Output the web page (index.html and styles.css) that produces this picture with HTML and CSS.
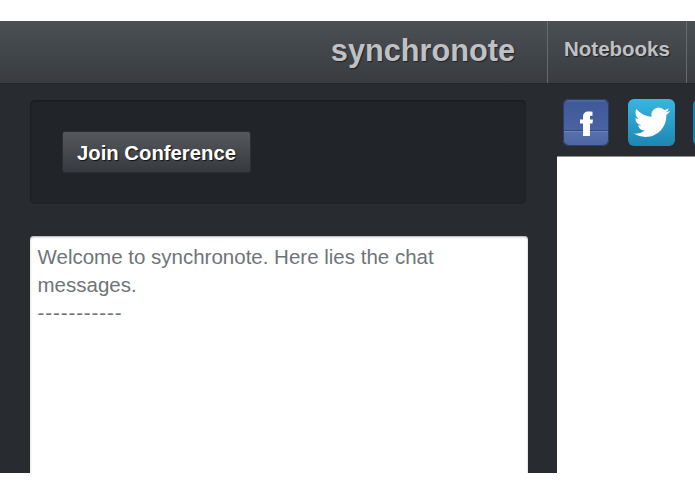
FILE: index.html
```html
<!DOCTYPE html>
<html lang="en">
<head>
	<title>synchronote</title>
	<link rel="stylesheet" href="styles.css">
</head>

<body>
	<div id="app">
		<div id="header">
			<div class="brand">synchronote</div>
			<div class="tab">Notebooks</div>
			<div class="tab-next"></div>
		</div>

		<div id="main">
			<div id="left">
				<div class="well">
					<button class="join" type="button">Join Conference</button>
				</div>
				<div class="chat">
					<p>Welcome to synchronote. Here lies the chat messages.</p>
					<p class="dashes">-----------</p>
				</div>
			</div>

			<div id="right">
				<div class="social">
					<div class="icon fb">
						<svg width="46" height="47" viewBox="0 0 46 47">
							<path d="M1 31.500H45" stroke="#36497c" stroke-width="1" />
							<path d="M1 32.500H45" stroke="#6c84b8" stroke-width="1" />
							<path d="M20 37V24.500H17V20.500H20V18C20 14.500 22 12.500 25.500 12.500C27 12.500 28.500 12.600 29.500 12.800V16.700H27.800C27.200 16.700 27 17 27 17.500V20.500H30L29.400 24.500H27V37Z" fill="#fff" />
						</svg>
					</div>
					<div class="icon tw">
						<svg width="36" height="32" viewBox="0 0 24 21">
							<path transform="translate(0 -2)" d="M23.953 4.570a10 10 0 01-2.825.775 4.958 4.958 0 002.163-2.723c-.951.555-2.005.959-3.127 1.184a4.920 4.920 0 00-8.384 4.482C7.690 8.095 4.067 6.130 1.640 3.162a4.822 4.822 0 00-.666 2.475c0 1.710.870 3.213 2.188 4.096a4.904 4.904 0 01-2.228-.616v.060a4.923 4.923 0 003.946 4.827 4.996 4.996 0 01-2.212.085 4.936 4.936 0 004.604 3.417 9.867 9.867 0 01-6.102 2.105c-.390 0-.779-.023-1.170-.067a13.995 13.995 0 007.557 2.209c9.053 0 13.998-7.496 13.998-13.985 0-.210 0-.420-.015-.630A9.935 9.935 0 0024 4.590z" fill="#fff" />
						</svg>
					</div>
					<div class="icon other"></div>
				</div>
				<div class="pane"></div>
			</div>
		</div>
	</div>
</body>
</html>
```

FILE: styles.css
```css
body {
	margin: 0;
	padding: 21px 0 0;
	background: #fff;
	font-family: "Liberation Sans", Arial, sans-serif;
}

#app {
	width: 695px;
	height: 452px;
	overflow: hidden;
	background: #282b30;
	display: flex;
	flex-direction: column;
}

#header {
	height: 62px;
	flex: none;
	display: flex;
	justify-content: flex-end;
	background: linear-gradient(#4b5055, #383c41);
	border-bottom: 1px solid #24272b;
}

.brand {
	font-size: 30.700px;
	font-weight: bold;
	line-height: 60px;
	color: #bfc1c4;
	text-shadow: 1px 1px 1px #222;
	margin-right: 32px;
}

.tab {
	width: 140px;
	box-sizing: border-box;
	padding-left: 16px;
	border-left: 1px solid #666a6e;
	border-right: 1px solid #666a6e;
	font-size: 20.500px;
	font-weight: bold;
	line-height: 56px;
	color: #bfc1c4;
	text-shadow: 1px 1px 1px #222;
}

.tab-next {
	width: 8px;
}

#main {
	flex: 1;
	display: flex;
	min-height: 0;
}

#left {
	width: 557px;
	flex: none;
	box-sizing: border-box;
	padding: 16px 27px 0 30px;
}

.well {
	width: 496px;
	height: 104px;
	box-sizing: border-box;
	padding: 31px 0 0 32px;
	background: #212429;
	border-radius: 5px;
	box-shadow: inset 0 1px 2px #181a1d;
}

.join {
	display: block;
	width: 189px;
	height: 42px;
	padding: 2px 0 0;
	font-family: inherit;
	font-size: 20.300px;
	font-weight: bold;
	color: #fff;
	text-shadow: 1px 1px 1px #111;
	background: linear-gradient(#55585d, #36393d);
	border: 1px solid #2c2f33;
	border-radius: 3px;
}

.chat {
	width: 498px;
	height: 260px;
	margin-top: 32px;
	box-sizing: border-box;
	padding: 7px 7.500px;
	background: #fff;
	border-radius: 4px 4px 0 0;
	box-shadow: inset 0 1px 2px #aaa;
	font-size: 20.500px;
	line-height: 28px;
	color: #6f7479;
}

.chat p {
	margin: 0;
}

.chat .dashes {
	letter-spacing: 0.900px;
}

#right {
	flex: 1;
	min-width: 0;
	display: flex;
	flex-direction: column;
	overflow: hidden;
}

.social {
	height: 72px;
	flex: none;
	box-sizing: border-box;
	padding: 15px 0 0 6px;
	display: flex;
	gap: 19px;
}

.icon {
	width: 46px;
	height: 47px;
	flex: none;
	border-radius: 6px;
	display: flex;
	align-items: center;
	justify-content: center;
}

.fb {
	background: linear-gradient(#5a72a8, #3f5a99 8%, #4a63a2 66%, #5670ad 70%, #4c66a4);
	box-shadow: 0 0 0 1px #2e3f66 inset;
}

.tw {
	width: 47px;
	background: linear-gradient(#38b6e2, #1e86b3);
}

.other {
	margin-left: -1px;
	background: #1a82b5;
}

.pane {
	flex: 1;
	background: #fff;
	border-top: 1px solid #8d8f92;
}
```
